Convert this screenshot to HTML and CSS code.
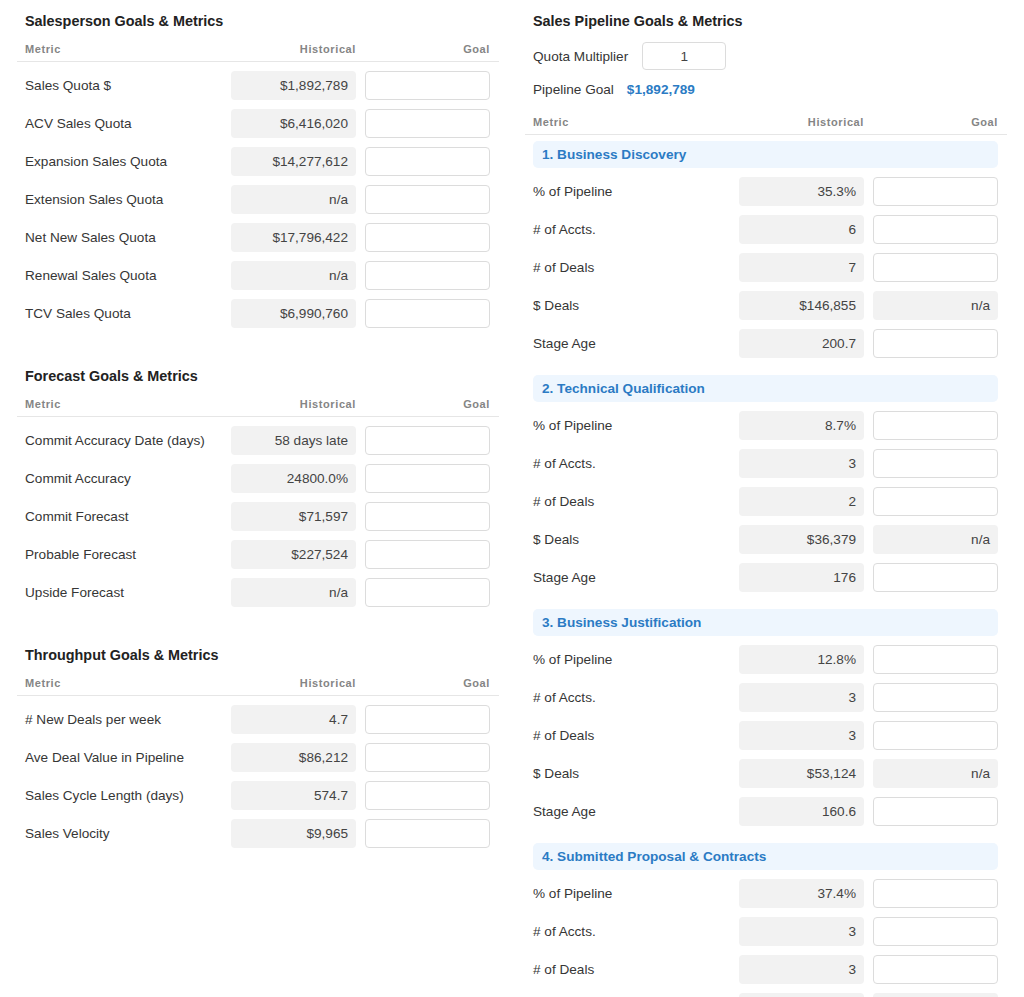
FILE: index.html
```html
<!DOCTYPE html>
<html lang="en">
<head>
    <meta charset="UTF-8">
    <meta name="viewport" content="width=device-width, initial-scale=1.0">
    <title>Goals &amp; Metrics</title>
    <link rel="stylesheet" href="styles.css">
</head>
<body>
<div class="page">
    <!-- left column: salesperson, forecast and throughput -->
    <div class="column">
        <section class="section">
            <h2 class="section-title">Salesperson Goals &amp; Metrics</h2>
            <div class="table-head"><span>Metric</span><span>Historical</span><span>Goal</span></div>
            <div class="rows">
                <div class="row"><span class="label">Sales Quota $</span><span class="hist">$1,892,789</span><input class="goal" type="text"></div>
                <div class="row"><span class="label">ACV Sales Quota</span><span class="hist">$6,416,020</span><input class="goal" type="text"></div>
                <div class="row"><span class="label">Expansion Sales Quota</span><span class="hist">$14,277,612</span><input class="goal" type="text"></div>
                <div class="row"><span class="label">Extension Sales Quota</span><span class="hist">n/a</span><input class="goal" type="text"></div>
                <div class="row"><span class="label">Net New Sales Quota</span><span class="hist">$17,796,422</span><input class="goal" type="text"></div>
                <div class="row"><span class="label">Renewal Sales Quota</span><span class="hist">n/a</span><input class="goal" type="text"></div>
                <div class="row"><span class="label">TCV Sales Quota</span><span class="hist">$6,990,760</span><input class="goal" type="text"></div>
            </div>
        </section>

        <section class="section">
            <h2 class="section-title">Forecast Goals &amp; Metrics</h2>
            <div class="table-head"><span>Metric</span><span>Historical</span><span>Goal</span></div>
            <div class="rows">
                <div class="row"><span class="label">Commit Accuracy Date (days)</span><span class="hist">58 days late</span><input class="goal" type="text"></div>
                <div class="row"><span class="label">Commit Accuracy</span><span class="hist">24800.0%</span><input class="goal" type="text"></div>
                <div class="row"><span class="label">Commit Forecast</span><span class="hist">$71,597</span><input class="goal" type="text"></div>
                <div class="row"><span class="label">Probable Forecast</span><span class="hist">$227,524</span><input class="goal" type="text"></div>
                <div class="row"><span class="label">Upside Forecast</span><span class="hist">n/a</span><input class="goal" type="text"></div>
            </div>
        </section>

        <section class="section">
            <h2 class="section-title">Throughput Goals &amp; Metrics</h2>
            <div class="table-head"><span>Metric</span><span>Historical</span><span>Goal</span></div>
            <div class="rows">
                <div class="row"><span class="label"># New Deals per week</span><span class="hist">4.7</span><input class="goal" type="text"></div>
                <div class="row"><span class="label">Ave Deal Value in Pipeline</span><span class="hist">$86,212</span><input class="goal" type="text"></div>
                <div class="row"><span class="label">Sales Cycle Length (days)</span><span class="hist">574.7</span><input class="goal" type="text"></div>
                <div class="row"><span class="label">Sales Velocity</span><span class="hist">$9,965</span><input class="goal" type="text"></div>
            </div>
        </section>
    </div>

    <!-- right column: pipeline stages -->
    <div class="column">
        <section class="section">
            <h2 class="section-title">Sales Pipeline Goals &amp; Metrics</h2>
            <div class="multiplier">
                <span class="label">Quota Multiplier</span>
                <input class="multiplier-input" type="text" value="1">
            </div>
            <div class="pipeline-goal">
                <span class="label">Pipeline Goal</span>
                <span class="pipeline-value">$1,892,789</span>
            </div>
            <div class="table-head"><span>Metric</span><span>Historical</span><span>Goal</span></div>

            <div class="stage">
                <div class="stage-title">1. Business Discovery</div>
                <div class="rows">
                    <div class="row"><span class="label">% of Pipeline</span><span class="hist">35.3%</span><input class="goal" type="text"></div>
                    <div class="row"><span class="label"># of Accts.</span><span class="hist">6</span><input class="goal" type="text"></div>
                    <div class="row"><span class="label"># of Deals</span><span class="hist">7</span><input class="goal" type="text"></div>
                    <div class="row"><span class="label">$ Deals</span><span class="hist">$146,855</span><span class="hist">n/a</span></div>
                    <div class="row"><span class="label">Stage Age</span><span class="hist">200.7</span><input class="goal" type="text"></div>
                </div>
            </div>

            <div class="stage">
                <div class="stage-title">2. Technical Qualification</div>
                <div class="rows">
                    <div class="row"><span class="label">% of Pipeline</span><span class="hist">8.7%</span><input class="goal" type="text"></div>
                    <div class="row"><span class="label"># of Accts.</span><span class="hist">3</span><input class="goal" type="text"></div>
                    <div class="row"><span class="label"># of Deals</span><span class="hist">2</span><input class="goal" type="text"></div>
                    <div class="row"><span class="label">$ Deals</span><span class="hist">$36,379</span><span class="hist">n/a</span></div>
                    <div class="row"><span class="label">Stage Age</span><span class="hist">176</span><input class="goal" type="text"></div>
                </div>
            </div>

            <div class="stage">
                <div class="stage-title">3. Business Justification</div>
                <div class="rows">
                    <div class="row"><span class="label">% of Pipeline</span><span class="hist">12.8%</span><input class="goal" type="text"></div>
                    <div class="row"><span class="label"># of Accts.</span><span class="hist">3</span><input class="goal" type="text"></div>
                    <div class="row"><span class="label"># of Deals</span><span class="hist">3</span><input class="goal" type="text"></div>
                    <div class="row"><span class="label">$ Deals</span><span class="hist">$53,124</span><span class="hist">n/a</span></div>
                    <div class="row"><span class="label">Stage Age</span><span class="hist">160.6</span><input class="goal" type="text"></div>
                </div>
            </div>

            <div class="stage">
                <div class="stage-title">4. Submitted Proposal &amp; Contracts</div>
                <div class="rows">
                    <div class="row"><span class="label">% of Pipeline</span><span class="hist">37.4%</span><input class="goal" type="text"></div>
                    <div class="row"><span class="label"># of Accts.</span><span class="hist">3</span><input class="goal" type="text"></div>
                    <div class="row"><span class="label"># of Deals</span><span class="hist">3</span><input class="goal" type="text"></div>
                    <div class="row"><span class="label">$ Deals</span><span class="hist">$155,214</span><span class="hist">n/a</span></div>
                    <div class="row"><span class="label">Stage Age</span><span class="hist">98.2</span><input class="goal" type="text"></div>
                </div>
            </div>
        </section>
    </div>
</div>
</body>
</html>
```

FILE: styles.css
```css
body {
    margin: 0;
    background-color: #fff;
    color: #363636;
    font-family: "Liberation Sans", Arial, Helvetica, sans-serif;
    font-size: 13.6px;
}
.page {
    display: grid;
    grid-template-columns: 482px 482px;
    gap: 26px;
    padding: 12px 17px 40px;
}
.section {
    margin-bottom: 39px;
}
.section-title {
    margin: 0;
    padding: 0 9px 0 8px;
    font-size: 14.4px;
    line-height: 18px;
    font-weight: bold;
    color: #222;
}
.table-head {
    display: grid;
    grid-template-columns: 1fr 125px 125px;
    gap: 9px;
    margin-top: 12px;
    padding: 0 9px 5px 8px;
    border-bottom: 1px solid #e6e6e6;
    font-size: 11px;
    line-height: 14px;
    font-weight: bold;
    letter-spacing: 0.6px;
    color: #858585;
}
.table-head span:nth-child(n+2) {
    text-align: right;
}
.rows {
    padding: 0 9px 0 8px;
}
.row {
    display: grid;
    grid-template-columns: 1fr 125px 125px;
    gap: 9px;
    align-items: center;
    height: 29px;
    margin-top: 9px;
}
.hist {
    height: 29px;
    line-height: 29px;
    padding-right: 8px;
    border-radius: 4px;
    background-color: #f2f2f2;
    text-align: right;
    color: #444;
}
.goal {
    box-sizing: border-box;
    width: 125px;
    height: 29px;
    margin: 0;
    border: 1px solid #dcdcdc;
    border-radius: 4px;
    background-color: #fff;
    font: inherit;
}

/* pipeline settings above the stage table */
.multiplier {
    display: flex;
    align-items: center;
    gap: 14px;
    margin-top: 12px;
    padding-left: 8px;
}
.multiplier-input {
    box-sizing: border-box;
    width: 84px;
    height: 28px;
    margin: 0;
    border: 1px solid #dcdcdc;
    border-radius: 4px;
    text-align: center;
    font: inherit;
    color: #444;
}
.pipeline-goal {
    display: flex;
    gap: 13px;
    margin-top: 11px;
    padding-left: 8px;
    line-height: 18px;
}
.pipeline-value {
    font-weight: bold;
    color: #2b7bc4;
}
.pipeline-goal + .table-head {
    margin-top: 16px;
}
.stage {
    margin-top: 6px;
    margin-bottom: 17px;
}
.stage-title {
    margin: 0 9px 0 8px;
    padding-left: 9px;
    height: 27px;
    line-height: 27px;
    border-radius: 5px;
    background-color: #eef6fe;
    font-weight: bold;
    color: #2b7bc4;
}
```
